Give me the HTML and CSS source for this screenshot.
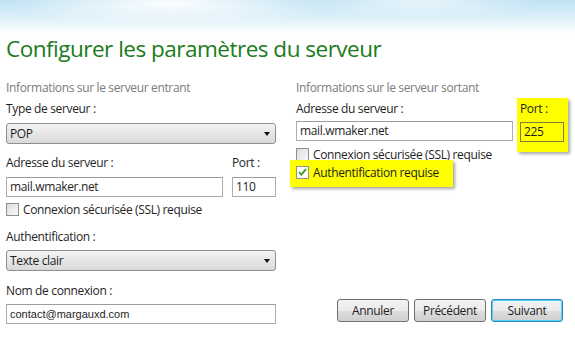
FILE: index.html
```html
<!DOCTYPE html>
<html lang="fr">
<head>
    <meta charset="UTF-8">
    <title>Configurer les paramètres du serveur</title>
    <link rel="stylesheet" href="styles.css">
</head>
<body>
    <div class="sky"></div>
    <h1 class="title">Configurer les paramètres du serveur</h1>
    <div class="columns">
        <div class="col">
            <div class="section">Informations sur le serveur entrant</div>
            <div class="label first">Type de serveur :</div>
            <div class="select">POP<span class="arrow"></span></div>

            <div class="row labels">
                <div class="label wide">Adresse du serveur :</div>
                <div class="label port-label">Port :</div>
            </div>
            <div class="row">
                <div class="input wide">mail.wmaker.net</div>
                <div class="input port">110</div>
            </div>
            <div class="check"><span class="box"></span>Connexion sécurisée (SSL) requise</div>

            <div class="label gap">Authentification :</div>
            <div class="select small">Texte clair<span class="arrow"></span></div>

            <div class="label gap">Nom de connexion :</div>
            <div class="input login">contact@margauxd.com</div>
        </div>

        <div class="col right">
            <div class="section">Informations sur le serveur sortant</div>
            <div class="row top">
                <div class="address">
                    <div class="label first">Adresse du serveur :</div>
                    <div class="input wide">mail.wmaker.net</div>
                </div>
                <div class="marker port-box">
                    <div class="label">Port :</div>
                    <div class="input port">225</div>
                </div>
            </div>
            <div class="check out"><span class="box"></span>Connexion sécurisée (SSL) requise</div>
            <div class="marker auth-box">
                <div class="check"><span class="box on">
                    <svg width="9" height="8" viewBox="0 0 9 8"><path d="M1 4.2 L3.4 6.6 L8 1.2" fill="none" stroke="#3a9a1a" stroke-width="1.8"/></svg>
                </span>Authentification requise</div>
            </div>

            <div class="buttons">
                <button class="btn">Annuler</button>
                <button class="btn">Précédent</button>
                <button class="btn default">Suivant</button>
            </div>
        </div>
    </div>
</body>
</html>
```

FILE: styles.css
```css
body {
    margin: 0;
    width: 575px;
    height: 338px;
    overflow: hidden;
    background: #fff;
    font-family: "Open Sans", "Noto Sans", sans-serif;
    font-size: 12px;
    letter-spacing: -0.35px;
    color: #1e1e1e;
}
.sky {
    height: 34px;
    margin-bottom: -34px;
    background:
        radial-gradient(ellipse 160px 22px at 170px 4px, rgba(255,255,255,0.95), rgba(255,255,255,0)),
        radial-gradient(ellipse 120px 16px at 420px 2px, rgba(255,255,255,0.6), rgba(255,255,255,0)),
        linear-gradient(#bfe2f3, #dff1fa 55%, #fff);
}
.title {
    margin: 0;
    padding: 34px 0 0 6px;
    height: 36px;
    font-size: 22.5px;
    font-weight: normal;
    line-height: 30px;
    color: #1b7b1b;
    letter-spacing: -0.5px;
}
.columns {
    display: grid;
    grid-template-columns: 270px 270px;
    column-gap: 20px;
    padding: 10px 0 0 6px;
}
.col {
    display: flex;
    flex-direction: column;
}
.section {
    color: #7b7b7b;
    line-height: 16px;
}
.label {
    line-height: 16px;
}
.label.first {
    margin-top: 5px;
}
.label.gap {
    margin-top: 12px;
}
.row {
    display: flex;
    gap: 9px;
}
.row.labels {
    margin-top: 11px;
}
.wide {
    width: 217px;
}
.port-label {
    width: 44px;
}
.select {
    margin-top: 6px;
    height: 19px;
    border: 1px solid #8e8f8f;
    border-radius: 3px;
    background: linear-gradient(#f4f4f4, #e6e6e6 50%, #d9d9d9);
    line-height: 19px;
    padding-left: 3px;
    position: relative;
}
.select.small {
    margin-top: 5px;
}
.arrow {
    position: absolute;
    right: 5px;
    top: 8px;
    border-left: 3.5px solid transparent;
    border-right: 3.5px solid transparent;
    border-top: 4px solid #111;
}
.input {
    box-sizing: border-box;
    height: 20px;
    border: 1px solid #abadb3;
    border-top-color: #9a9ca2;
    background: #fff;
    line-height: 18px;
    padding-left: 3px;
}
.row .input {
    margin-top: 6px;
}
.input.port {
    width: 44px;
}
.input.login {
    margin-top: 5px;
    width: 270px;
    font-family: "Liberation Sans", Arial, sans-serif;
    font-size: 11px;
    letter-spacing: 0;
}
.check {
    display: flex;
    align-items: center;
    height: 16px;
    margin-top: 4px;
}
.box {
    box-sizing: border-box;
    width: 13px;
    height: 13px;
    margin-right: 4px;
    border: 1px solid #8f8f8f;
    background: linear-gradient(135deg, #dcdcdc, #fbfbfb);
    display: flex;
    align-items: center;
    justify-content: center;
}
.right .row.top {
    gap: 4px;
    align-items: flex-start;
}
.address .input {
    margin-top: 4px;
}
.marker {
    background: #ffff00;
    box-shadow: 2px 2px 3px rgba(0, 0, 0, 0.35);
}
.port-box {
    margin: 2px 0 -11px 0;
    padding: 3px 4px 10px 3px;
}
.port-box .input {
    margin-top: 5px;
    background: transparent;
    border-color: #7d7d3a;
}
.check.out {
    margin-top: 5px;
}
.auth-box {
    align-self: flex-start;
    margin: -2px 0 0 -6px;
    padding: 4px 14px 7px 6px;
}
.auth-box .check {
    margin-top: 0;
}
.box.on {
    background: #fff;
}
.buttons {
    margin-top: auto;
    margin-bottom: 2px;
    display: flex;
    justify-content: flex-end;
    gap: 5px;
    padding-right: 3px;
}
.btn {
    width: 72px;
    height: 23px;
    border: 1px solid #707070;
    border-radius: 3px;
    background: linear-gradient(#f2f2f2, #ebebeb 50%, #dddddd 51%, #cfcfcf);
    font-family: "Open Sans", "Noto Sans", sans-serif;
    font-size: 12px;
    letter-spacing: -0.35px;
    color: #1e1e1e;
    padding: 0;
}
.btn.default {
    border-color: #3c7fb1;
    box-shadow: inset 0 0 0 1px #48d5fb;
}
```
